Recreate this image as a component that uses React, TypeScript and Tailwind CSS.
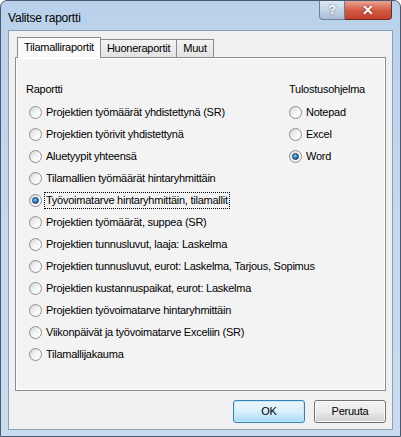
import { useState } from "react";

const reports = [
  "Projektien työmäärät yhdistettynä (SR)",
  "Projektien työrivit yhdistettynä",
  "Aluetyypit yhteensä",
  "Tilamallien työmäärät hintaryhmittäin",
  "Työvoimatarve hintaryhmittäin, tilamallit",
  "Projektien työmäärät, suppea (SR)",
  "Projektien tunnusluvut, laaja: Laskelma",
  "Projektien tunnusluvut, eurot: Laskelma, Tarjous, Sopimus",
  "Projektien kustannuspaikat, eurot: Laskelma",
  "Projektien työvoimatarve hintaryhmittäin",
  "Viikonpäivät ja työvoimatarve Exceliin (SR)",
  "Tilamallijakauma",
];

const programs = ["Notepad", "Excel", "Word"];

const Radio = ({ checked }: { checked: boolean }) => (
  <span className="relative flex h-[13px] w-[13px] shrink-0 items-center justify-center rounded-full border border-[#8f8f8f] bg-gradient-to-br from-[#d5d5d5] via-[#f4f4f4] to-[#ffffff]">
    {checked && (
      <span className="h-[7px] w-[7px] rounded-full border border-[#0f3a6a] bg-[radial-gradient(circle_at_40%_35%,#7fd0f5,#1c5fa8_70%,#0d3d7a)]" />
    )}
  </span>
);

export default function App() {
  const [report, setReport] = useState(4);
  const [program, setProgram] = useState(2);

  return (
    <div
      className="flex h-[437px] w-[401px] flex-col overflow-hidden rounded-t-[7px] border border-[#4a5a6e] bg-gradient-to-b from-[#b9d1ea] via-[#c4d9ef] to-[#c9dcf0] text-[11px] tracking-[-0.25px] text-black"
      style={{ fontFamily: '"Liberation Sans", Arial, sans-serif' }}
    >
      {/* title bar */}
      <div className="flex h-[29px] shrink-0 items-start pl-[7px] pr-[8px]">
        <span className="mt-[8px] text-[12px] tracking-[-0.2px] text-black">Valitse raportti</span>
        <div className="ml-auto flex">
          <div className="flex h-[19px] w-[26px] items-center justify-center rounded-bl-[4px] border border-t-0 border-[#6d7f97] bg-gradient-to-b from-[#dce7f3] via-[#c5d5e8] to-[#a9bdd6] text-[13px] font-bold text-white [text-shadow:0_0_2px_#40506a]">
            ?
          </div>
          <div className="flex h-[19px] w-[47px] items-center justify-center rounded-br-[4px] border border-l-0 border-t-0 border-[#6d2a22] bg-gradient-to-b from-[#e8a493] via-[#d35c46] to-[#c2402b] text-[14px] font-bold text-white [text-shadow:0_0_2px_#5a1a10]">
            ✕
          </div>
        </div>
      </div>

      {/* client */}
      <div className="mx-[7px] flex h-[400px] flex-col border border-[#8c9fb6] bg-[#f0f0f0] px-[6px] pt-[6px]">
        {/* tabs */}
        <div className="relative z-10 flex items-end pl-[2px]">
          <div className="-mb-px flex h-[21px] items-center border border-b-0 border-[#898c95] bg-[#fafafa] px-[6px] pb-[1px]">
            Tilamalliraportit
          </div>
          <div className="flex h-[18px] items-center border border-b-0 border-l-0 border-[#898c95] bg-gradient-to-b from-[#f2f2f2] to-[#e3e3e3] px-[6px]">
            Huoneraportit
          </div>
          <div className="flex h-[18px] items-center border border-b-0 border-l-0 border-[#898c95] bg-gradient-to-b from-[#f2f2f2] to-[#e3e3e3] px-[6px]">
            Muut
          </div>
        </div>

        {/* panel */}
        <div className="flex h-[334px] border border-[#898c95] bg-[#f3f3f3] pl-[10px] pr-[8px] pt-[20px] shadow-[inset_1px_1px_0_#ffffff,inset_-1px_-1px_0_#ffffff]">
          <div className="flex min-w-0 flex-1 flex-col">
            <div className="mb-[1px] flex h-[22px] items-center">Raportti</div>
            {reports.map((r, i) => (
              <div
                key={r}
                onClick={() => setReport(i)}
                className="flex h-[22px] cursor-default items-center gap-[2px] whitespace-nowrap pl-[3px]"
              >
                <Radio checked={report === i} />
                <span
                  className={
                    report === i
                      ? "border border-dotted border-black px-[1px] leading-[15px]"
                      : "border border-transparent px-[1px] leading-[15px]"
                  }
                >
                  {r}
                </span>
              </div>
            ))}
          </div>
          <div className="flex w-[88px] shrink-0 flex-col">
            <div className="mb-[1px] flex h-[22px] items-center">Tulostusohjelma</div>
            {programs.map((p, i) => (
              <div
                key={p}
                onClick={() => setProgram(i)}
                className="flex h-[22px] cursor-default items-center gap-[2px] whitespace-nowrap"
              >
                <Radio checked={program === i} />
                <span className="border border-transparent px-[1px] leading-[15px]">{p}</span>
              </div>
            ))}
          </div>
        </div>

        {/* buttons */}
        <div className="mt-[9px] flex justify-end gap-[9px]">
          <button className="h-[23px] w-[72px] rounded-[3px] border border-[#3c7fb1] bg-gradient-to-b from-[#eaf6fd] via-[#d9f0fc] to-[#a7d9f5] shadow-[inset_0_0_0_1px_#bfe9fb]">
            OK
          </button>
          <button className="h-[23px] w-[72px] rounded-[3px] border border-[#707070] bg-gradient-to-b from-[#f2f2f2] via-[#ebebeb] to-[#cfcfcf] shadow-[inset_0_0_0_1px_#fcfcfc]">
            Peruuta
          </button>
        </div>
      </div>
    </div>
  );
}
